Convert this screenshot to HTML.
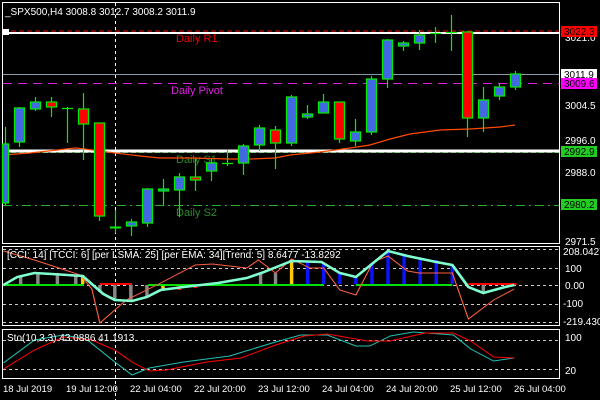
<!DOCTYPE html>
<html><head><meta charset="utf-8"><style>
body{margin:0;background:#000;width:600px;height:400px;overflow:hidden}
svg{display:block;font-family:"Liberation Sans",sans-serif}
</style></head><body>
<svg width="600" height="400" viewBox="0 0 600 400" xmlns="http://www.w3.org/2000/svg">
<rect width="600" height="400" fill="#000"/>
<rect x="2.5" y="2.5" width="557" height="241" fill="none" stroke="#fff"/>
<rect x="2.5" y="246.5" width="557" height="79" fill="none" stroke="#fff"/>
<rect x="2.5" y="329.5" width="557" height="49" fill="none" stroke="#fff"/>
<line x1="115.5" y1="3" x2="115.5" y2="400" stroke="#fff" stroke-dasharray="3,3"/>
<line x1="3" y1="74.5" x2="559" y2="74.5" stroke="#8899aa"/>
<line x1="3" y1="83.5" x2="559" y2="83.5" stroke="#e020e0" stroke-dasharray="9,6"/>
<line x1="3" y1="205.5" x2="559" y2="205.5" stroke="#2eae2e" stroke-dasharray="9,4,2,4"/>
<line x1="3" y1="152.5" x2="559" y2="152.5" stroke="#22aa22" stroke-dasharray="5,3"/>
<line x1="3" y1="151" x2="559" y2="151" stroke="#fff" stroke-width="3"/>
<line x1="3" y1="31" x2="559" y2="31" stroke="#e00" stroke-dasharray="5,3"/>
<line x1="3" y1="33" x2="559" y2="33" stroke="#fff" stroke-width="2"/>
<rect x="3" y="29" width="6" height="6" fill="#fff"/>
<text x="176" y="42" fill="#e00" font-size="11">Daily R1</text>
<text x="171" y="94" fill="#e020e0" font-size="11">Daily Pivot</text>
<text x="176" y="163" fill="#2a8a2a" font-size="11">Daily S1</text>
<text x="176" y="216" fill="#2a8a2a" font-size="11">Daily S2</text>
<polyline fill="none" stroke="#ff4a00" stroke-width="1.2" points="3,155 30,153 75,148 85,149 115,153 140,156 160,158 190,158 230,159 250,159 275,158 290,155 300,154 320,152 350,148 370,145 390,139 410,134 440,130 470,129 500,127 515,125"/>
<g stroke="#00ee00" stroke-width="1.2">
<line x1="5.5" y1="127" x2="5.5" y2="205"/><rect x="2.5" y="144" width="6" height="59" fill="#4169e1"/>
<line x1="19.5" y1="107" x2="19.5" y2="147"/><rect x="14.5" y="108" width="10" height="34" fill="#4169e1"/>
<line x1="35.5" y1="97" x2="35.5" y2="111"/><rect x="30.5" y="102" width="10" height="7" fill="#4169e1"/>
<line x1="51.5" y1="97" x2="51.5" y2="117"/><rect x="46.5" y="102" width="10" height="5" fill="#f00"/>
<line x1="67.5" y1="107" x2="67.5" y2="143"/><line x1="62" y1="108.5" x2="73" y2="108.5"/>
<line x1="83.5" y1="93" x2="83.5" y2="160"/><rect x="78.5" y="109" width="10" height="15" fill="#f00"/>
<line x1="99.5" y1="123" x2="99.5" y2="221"/><rect x="94.5" y="123" width="10" height="93" fill="#f00"/>
<line x1="115.5" y1="210" x2="115.5" y2="233"/><line x1="110" y1="227.5" x2="121" y2="227.5" stroke-width="2"/>
<line x1="131.5" y1="219" x2="131.5" y2="236"/><rect x="126.5" y="222" width="10" height="4" fill="#4169e1"/>
<line x1="147.5" y1="188" x2="147.5" y2="227"/><rect x="142.5" y="189" width="10" height="34" fill="#4169e1"/>
<line x1="163.5" y1="179" x2="163.5" y2="206"/><rect x="158.5" y="189" width="10" height="2" fill="#4169e1"/>
<line x1="179.5" y1="173" x2="179.5" y2="217"/><rect x="174.5" y="177" width="10" height="13" fill="#4169e1"/>
<line x1="195.5" y1="159" x2="195.5" y2="191"/><rect x="190.5" y="177" width="10" height="3" fill="#f00"/>
<line x1="211.5" y1="158" x2="211.5" y2="181"/><rect x="206.5" y="163" width="10" height="8" fill="#4169e1"/>
<line x1="227.5" y1="150" x2="227.5" y2="166"/><line x1="222" y1="163.5" x2="233" y2="163.5"/>
<line x1="243.5" y1="144" x2="243.5" y2="175"/><rect x="238.5" y="146" width="10" height="17" fill="#4169e1"/>
<line x1="259.5" y1="125" x2="259.5" y2="151"/><rect x="254.5" y="128" width="10" height="17" fill="#4169e1"/>
<line x1="275.5" y1="126" x2="275.5" y2="169"/><rect x="270.5" y="130" width="10" height="13" fill="#f00"/>
<line x1="291.5" y1="95" x2="291.5" y2="146"/><rect x="286.5" y="97" width="10" height="46" fill="#4169e1"/>
<line x1="307.5" y1="105" x2="307.5" y2="119"/><rect x="302.5" y="114" width="10" height="3" fill="#4169e1"/>
<line x1="323.5" y1="94" x2="323.5" y2="113"/><rect x="318.5" y="102" width="10" height="11" fill="#4169e1"/>
<line x1="339.5" y1="102" x2="339.5" y2="143"/><rect x="334.5" y="102" width="10" height="37" fill="#f00"/>
<line x1="355.5" y1="119" x2="355.5" y2="146"/><rect x="350.5" y="132" width="10" height="9" fill="#4169e1"/>
<line x1="371.5" y1="76" x2="371.5" y2="135"/><rect x="366.5" y="79" width="10" height="53" fill="#4169e1"/>
<line x1="387.5" y1="39" x2="387.5" y2="88"/><rect x="382.5" y="40" width="10" height="39" fill="#4169e1"/>
<line x1="403.5" y1="41" x2="403.5" y2="51"/><rect x="398.5" y="43" width="10" height="3" fill="#4169e1"/>
<line x1="419.5" y1="30" x2="419.5" y2="50"/><rect x="414.5" y="35" width="10" height="8" fill="#4169e1"/>
<line x1="435.5" y1="27" x2="435.5" y2="43"/><line x1="430" y1="33.5" x2="441" y2="33.5"/>
<line x1="451.5" y1="15" x2="451.5" y2="51"/><line x1="446" y1="32.5" x2="457" y2="32.5"/>
<line x1="467.5" y1="32" x2="467.5" y2="137"/><rect x="462.5" y="32" width="10" height="86" fill="#f00"/>
<line x1="483.5" y1="87" x2="483.5" y2="132"/><rect x="478.5" y="100" width="10" height="18" fill="#4169e1"/>
<line x1="499.5" y1="83" x2="499.5" y2="100"/><rect x="494.5" y="87" width="10" height="9" fill="#4169e1"/>
<line x1="515.5" y1="71" x2="515.5" y2="90"/><rect x="510.5" y="74" width="10" height="13" fill="#4169e1"/>
</g>
<g font-size="10" fill="#fff">
<text x="565" y="41">3021.0</text>
<text x="565" y="109">3004.5</text>
<text x="565" y="144">2996.0</text>
<text x="565" y="176">2988.0</text>
<text x="565" y="245">2971.5</text>
<rect x="561" y="26" width="36" height="11" fill="#f00"/><text x="564" y="35" fill="#000">3022.3</text>
<rect x="561" y="69" width="36" height="10" fill="#fff"/><text x="564" y="78" fill="#000">3011.9</text>
<rect x="561" y="78" width="36" height="11" fill="#f0f"/><text x="564" y="87" fill="#000">3009.6</text>
<rect x="561" y="146" width="36" height="11" fill="#22cc22"/><text x="564" y="155" fill="#000">2992.9</text>
<rect x="561" y="199" width="36" height="11" fill="#22cc22"/><text x="564" y="208" fill="#000">2980.2</text>
<text x="5" y="15" font-size="10">_SPX500,H4  3008.8 3012.7 3008.2 3011.9</text>
</g>
<g stroke="#ccc" stroke-dasharray="3,3">
<line x1="3" y1="249.5" x2="559" y2="249.5"/><line x1="3" y1="268.5" x2="559" y2="268.5"/>
<line x1="3" y1="285.5" x2="559" y2="285.5"/><line x1="3" y1="304.5" x2="559" y2="304.5"/>
<line x1="3" y1="322.5" x2="559" y2="322.5"/>
<line x1="3" y1="340.5" x2="559" y2="340.5"/><line x1="3" y1="369.5" x2="559" y2="369.5"/>
</g>
<g transform="scale(1.148,1)">
<g stroke-width="3">
<g stroke="#888"><line x1="18" y1="284" x2="18" y2="276"/><line x1="33" y1="284" x2="33" y2="273"/><line x1="50" y1="284" x2="50" y2="273"/><line x1="66" y1="284" x2="66" y2="275"/><line x1="87" y1="285" x2="87" y2="292"/><line x1="100" y1="285" x2="100" y2="300"/><line x1="114" y1="285" x2="114" y2="301"/><line x1="128" y1="285" x2="128" y2="297"/><line x1="227" y1="284" x2="227" y2="273"/><line x1="240" y1="284" x2="240" y2="273"/><line x1="421" y1="285" x2="421" y2="293"/></g>
<g stroke="#fc0"><line x1="72" y1="284" x2="72" y2="275"/><line x1="142" y1="285" x2="142" y2="290"/><line x1="254" y1="284" x2="254" y2="262"/></g>
<g stroke="#f00"><line x1="156" y1="285" x2="156" y2="290"/><line x1="170" y1="285" x2="170" y2="288"/></g>
<g stroke="#0a14ff"><line x1="268" y1="284" x2="268" y2="261"/><line x1="282" y1="284" x2="282" y2="263"/><line x1="296" y1="284" x2="296" y2="273"/><line x1="310" y1="284" x2="310" y2="277"/><line x1="324" y1="284" x2="324" y2="263"/><line x1="338" y1="284" x2="338" y2="252"/><line x1="352" y1="284" x2="352" y2="254"/><line x1="366" y1="284" x2="366" y2="258"/><line x1="380" y1="284" x2="380" y2="260"/><line x1="394" y1="284" x2="394" y2="265"/></g>
</g>
<g stroke-width="2">
<line x1="3" y1="285" x2="73" y2="285" stroke="#00e000"/>
<line x1="87" y1="284" x2="115" y2="284" stroke="#f00"/>
<line x1="129" y1="285" x2="282" y2="285" stroke="#00e000"/>
<line x1="310" y1="285" x2="394" y2="285" stroke="#00e000"/>
<line x1="408" y1="284" x2="450" y2="284" stroke="#f00"/>
</g>
<polyline fill="none" stroke="#ff6040" points="3,251 30,260 70,275 80,289 87,323 110,300 140,283 170,265 185,264 215,268 225,260 240,273 254,259 270,268 282,268 296,290 310,295 325,262 338,256 355,271 365,273 394,273 408,319 430,300 448,289"/>
<polyline fill="none" stroke="#80ffd0" stroke-width="2.5" points="3,285 15,277 30,273 45,274 72,276 80,284 90,294 100,300 115,301 128,297 140,290 160,287 190,283 215,278 230,272 254,261 280,262 296,273 310,277 325,263 338,251 355,256 380,262 394,265 408,287 421,293 440,287 448,285"/>
<polyline fill="none" stroke="#20c0b0" points="3,363 30,340 55,335 75,339 100,362 115,375 130,368 160,362 200,356 240,342 262,335 285,335 310,346 322,346 340,336 360,332 395,335 410,349 430,361 448,358"/>
<polyline fill="none" stroke="#f00" points="3,369 30,350 55,337 80,340 100,350 115,362 130,371 145,370 180,362 210,358 240,345 265,336 285,334 320,341 340,341 370,333 395,333 410,341 430,357 448,358"/>
</g>
<text x="7" y="258" fill="#fff" font-size="10">[CCI: 14] [TCCI: 6] [per LSMA: 25] [per EMA: 34][Trend: 5]  8.6477 -13.8292</text>
<text x="7" y="341" fill="#fff" font-size="10">Sto(10,3,3) 43.0886 41.1913</text>
<g font-size="10" fill="#fff">
<text x="563" y="255">208.0427</text><text x="565" y="272">100</text><text x="565" y="289">0.00</text><text x="563" y="307">-100</text><text x="563" y="325">-219.430</text>
<text x="565" y="341">100</text><text x="565" y="374">20</text>
<g font-size="9.5"><text x="3" y="392">18 Jul 2019</text><text x="66" y="392">19 Jul 12:00</text><text x="130" y="392">22 Jul 04:00</text><text x="194" y="392">22 Jul 20:00</text><text x="258" y="392">23 Jul 12:00</text><text x="322" y="392">24 Jul 04:00</text><text x="386" y="392">24 Jul 20:00</text><text x="450" y="392">25 Jul 12:00</text><text x="514" y="392">26 Jul 04:00</text></g>
</g>
</svg>
</body></html>
